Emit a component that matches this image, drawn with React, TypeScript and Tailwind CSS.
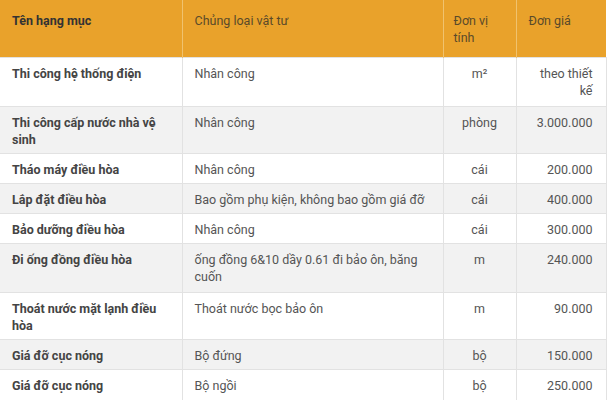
import React from 'react';

interface Row {
  name: string;
  material: string;
  unit: React.ReactNode;
  price: string;
  loose?: boolean;
}

const rows: Row[] = [
  { name: 'Thi công hệ thống điện', material: 'Nhân công', unit: <>m²</>, price: 'theo thiết kế', loose: true },
  { name: 'Thi công cấp nước nhà vệ sinh', material: 'Nhân công', unit: 'phòng', price: '3.000.000' },
  { name: 'Tháo máy điều hòa', material: 'Nhân công', unit: 'cái', price: '200.000' },
  { name: 'Lắp đặt điều hòa', material: 'Bao gồm phụ kiện, không bao gồm giá đỡ', unit: 'cái', price: '400.000' },
  { name: 'Bảo dưỡng điều hòa', material: 'Nhân công', unit: 'cái', price: '300.000' },
  { name: 'Đi ống đồng điều hòa', material: 'ống đồng 6&10 dầy 0.61 đi bảo ôn, băng cuốn', unit: 'm', price: '240.000', loose: true },
  { name: 'Thoát nước mặt lạnh điều hòa', material: 'Thoát nước bọc bảo ôn', unit: 'm', price: '90.000' },
  { name: 'Giá đỡ cục nóng', material: 'Bộ đứng', unit: 'bộ', price: '150.000' },
  { name: 'Giá đỡ cục nóng', material: 'Bộ ngồi', unit: 'bộ', price: '250.000', loose: true },
];

const App = () => {
  return (
    <div className="w-[610px] h-[400px] overflow-hidden bg-white font-['Roboto',sans-serif] text-[12.5px] leading-[17px] text-[#555]">
      <table className="w-[606px] table-fixed border-collapse">
        <colgroup>
          <col className="w-[182px]" />
          <col className="w-[261px]" />
          <col className="w-[73px]" />
          <col className="w-[90px]" />
        </colgroup>
        <thead>
          <tr className="bg-[#e9a22b] align-top">
            <th className="px-3 pt-[12px] pb-[11px] text-left font-bold text-[#333] border-r border-[#f0c26e]">Tên hạng mục</th>
            <th className="px-3 pt-[12px] pb-[11px] text-left font-normal text-[#5a4a2a] border-r border-[#f0c26e]">Chủng loại vật tư</th>
            <th className="px-[10px] pt-[12px] pb-[11px] text-left font-normal text-[#5a4a2a] border-r border-[#f0c26e]">Đơn vị tính</th>
            <th className="px-3 pt-[12px] pb-[11px] text-left font-normal text-[#5a4a2a]">Đơn giá</th>
          </tr>
        </thead>
        <tbody>
          {rows.map((r, i) => {
            const pad = r.loose ? 'pt-[7px] pb-[7px]' : 'pt-[7px] pb-[5px]';
            return (
              <tr key={i} className={`align-top border-t border-[#e2e2e2] ${i % 2 === 1 ? 'bg-[#f2f2f2]' : 'bg-white'}`}>
                <td className={`px-3 ${pad} font-bold text-[#444] border-r border-[#e2e2e2]`}>{r.name}</td>
                <td className={`px-3 ${pad} border-r border-[#e2e2e2]`}>{r.material}</td>
                <td className={`px-2 ${pad} text-center border-r border-[#e2e2e2]`}>{r.unit}</td>
                <td className={`pl-3 pr-[13px] ${pad} text-right border-r border-[#e2e2e2]`}>{r.price}</td>
              </tr>
            );
          })}
        </tbody>
      </table>
    </div>
  );
};

export default App;
